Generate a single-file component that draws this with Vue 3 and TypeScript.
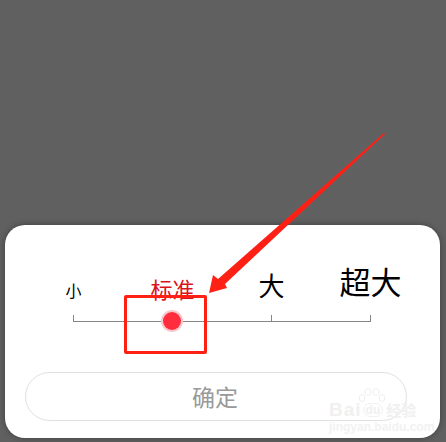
<script setup lang="ts">
interface Size { label: string; cls: string; active: boolean }
const sizes: Size[] = [
  { label: '小', cls: 's', active: false },
  { label: '标准', cls: 'm', active: true },
  { label: '大', cls: 'l', active: false },
  { label: '超大', cls: 'xl', active: false },
]
</script>

<template>
  <div class="page">
    <div class="sheet">
      <div class="labels">
        <span v-for="s in sizes" :key="s.label" class="label" :class="[s.cls, { active: s.active }]">{{ s.label }}</span>
      </div>
      <div class="track">
        <i v-for="s in sizes" :key="s.label" class="tick"></i>
        <span class="thumb"></span>
      </div>
      <button class="ok">确定</button>
    </div>

    <div class="watermark">
      <svg class="paw" width="28" height="15" viewBox="0 0 28 15">
        <g fill="none" stroke="#efefef" stroke-width="1">
          <ellipse cx="4" cy="10" rx="2.8" ry="3.4" />
          <ellipse cx="10" cy="4" rx="3" ry="3.4" />
          <ellipse cx="18" cy="4" rx="3" ry="3.4" />
          <ellipse cx="24" cy="10" rx="2.8" ry="3.4" />
        </g>
      </svg>
      <div class="wm-row"><span class="wm-bai">Bai</span><span class="wm-du">du</span><span class="wm-jy">经验</span></div>
      <div class="wm-url">jingyan.baidu.com</div>
    </div>

    <div class="mark"></div>
    <svg class="arrow" width="446" height="442" viewBox="0 0 446 442">
      <polygon points="384,133 385,134 225,284 227,288 209,293 213,275 218,279" fill="#ff2015" />
    </svg>
  </div>
</template>

<style>
html, body { margin: 0; background: #606060; }
</style>

<style scoped>
.page {
  position: relative;
  width: 446px;
  height: 442px;
  overflow: hidden;
  display: flex;
  flex-direction: column;
  justify-content: flex-end;
  padding: 0 6px 4px 5px;
  box-sizing: border-box;
  background: #606060;
  font-family: "Noto Sans CJK SC", "Liberation Sans", sans-serif;
}
.sheet {
  height: 213px;
  background: #fff;
  border-radius: 20px;
  box-shadow: 0 0 6px rgba(0, 0, 0, 0.35);
  box-sizing: border-box;
  padding: 0 19px 0 19px;
  display: flex;
  flex-direction: column;
}
.labels {
  height: 75px;
  display: grid;
  grid-template-columns: repeat(4, 99px);
  align-items: end;
  justify-items: center;
}
.label { color: #000; line-height: 1; white-space: nowrap; }
.label.s { font-size: 16px; margin-bottom: 2px; }
.label.m { font-size: 22px; margin-bottom: 1px; }
.label.l { font-size: 26px; margin-bottom: 2px; }
.label.xl { font-size: 31px; margin-bottom: 4px; }
.label.active { color: #d9141c; }
.track {
  position: relative;
  margin: 15px 0 0 49px;
  width: 298px;
  height: 6px;
  border-bottom: 1px solid #858585;
  display: flex;
  justify-content: space-between;
}
.tick {
  width: 1px;
  height: 6px;
  background: #858585;
}
.thumb {
  position: absolute;
  left: 90px;
  top: -3px;
  width: 18px;
  height: 18px;
  border-radius: 50%;
  background: #ff2d3e;
  box-shadow: 0 0 0 2px #f7c9ce;
}
.ok {
  margin: 50px 14px 0 1px;
  height: 49px;
  border: 1px solid #e0e0e0;
  border-radius: 25px;
  background: transparent;
  color: #999;
  font: inherit;
  font-size: 23px;
  line-height: 1;
  padding: 0 2px 0 0;
}
.watermark {
  position: absolute;
  left: 329px;
  top: 388px;
  width: 92px;
  color: #f0f0f0;
}
.paw { position: absolute; left: 29px; top: 0; }
.wm-row {
  display: flex;
  align-items: center;
  margin-top: 13px;
  height: 17px;
  font-family: "Liberation Sans", sans-serif;
}
.wm-bai { font-size: 19px; font-weight: 700; letter-spacing: 1px; }
.wm-du {
  font-size: 12px;
  font-weight: 700;
  margin: 0 3px 0 1px;
  padding: 0 2px;
  border: 1px solid #f0f0f0;
  border-radius: 7px;
  line-height: 12px;
}
.wm-jy {
  font-family: "Noto Sans CJK SC", sans-serif;
  font-size: 15px;
  font-weight: 700;
  line-height: 16px;
  white-space: nowrap;
}
.wm-url {
  font-family: "Liberation Sans", sans-serif;
  font-size: 12px;
  font-weight: 700;
  margin-top: 2px;
  white-space: nowrap;
  color: #f2f2f2;
}
.mark {
  position: absolute;
  left: 124px;
  top: 295px;
  width: 83px;
  height: 59px;
  box-sizing: border-box;
  border: 3px solid #ff2015;
  border-radius: 2px;
}
.arrow { position: absolute; left: 0; top: 0; }
</style>
